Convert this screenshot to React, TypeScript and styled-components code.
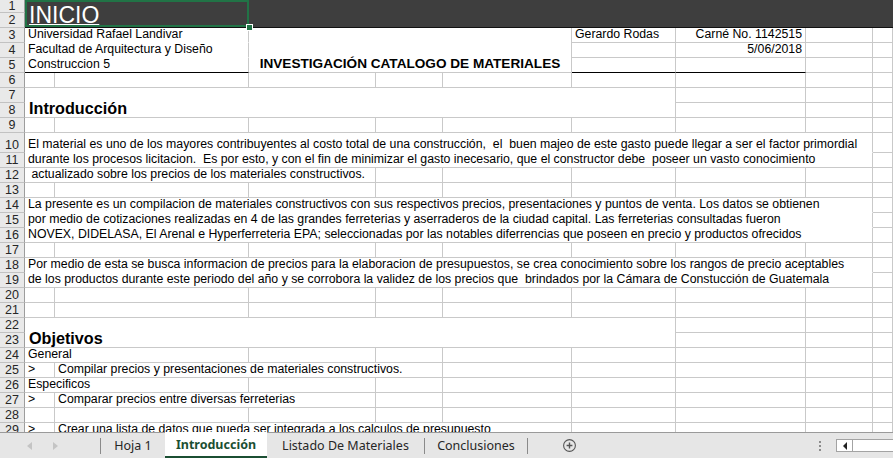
import React from 'react';
import styled, { createGlobalStyle, css } from 'styled-components';

const GlobalStyle = createGlobalStyle`
  html, body { margin: 0; padding: 0; background: #fff; }
  body { font-family: "Liberation Sans", Arial, sans-serif; }
`;

const GRID = '#c9c9c9';

const Window = styled.div`
  width: 893px;
  height: 458px;
  overflow: hidden;
  display: flex;
  flex-direction: column;
  background: #fff;
`;

const Sheet = styled.div`
  flex: 0 0 432px;
  overflow: hidden;
  display: grid;
  grid-template-columns: 25px 30px 194px 127px 67px 129px 104px 130px 67px 1fr;
  grid-template-rows: 13px repeat(8, 15px) 20px repeat(19, 15px);
`;

const RowHead = styled.div<{ $row: number }>`
  grid-column: 1;
  grid-row: ${p => p.$row};
  box-sizing: border-box;
  background: #e9e9e9;
  border-bottom: 1px solid #c2c2c2;
  border-right: 1px solid #9d9d9d;
  display: flex;
  align-items: ${p => (p.$row === 1 ? 'center' : 'flex-end')};
  justify-content: center;
  font-size: 12.5px;
  line-height: ${p => (p.$row === 1 ? '12px' : '14px')};
  color: #262626;
  overflow: hidden;
`;

type Variant = 'plain' | 'title' | 'heading' | 'link' | 'band';

interface CellProps {
  $row: number;
  $col: number;
  $span: number;
  $rows: number;
  $variant: Variant;
  $align: 'left' | 'right' | 'center';
  $bottom: 'grid' | 'none' | 'dark';
}

const Cell = styled.div<CellProps>`
  grid-column: ${p => p.$col + 2} / span ${p => p.$span};
  grid-row: ${p => p.$row} / span ${p => p.$rows};
  box-sizing: border-box;
  position: relative;
  display: flex;
  align-items: flex-end;
  justify-content: ${p => (p.$align === 'right' ? 'flex-end' : p.$align === 'center' ? 'center' : 'flex-start')};
  padding: 0 3px 1px 3px;
  border-right: 1px solid ${GRID};
  border-bottom: ${p => (p.$bottom === 'none' ? '1px solid transparent' : p.$bottom === 'dark' ? '1px solid #000' : `1px solid ${GRID}`)};
  font-size: 12.3px;
  line-height: 14px;
  color: #000;
  white-space: pre;
  overflow: hidden;
  ${p => p.$variant === 'title' && css`
    font-weight: 700;
    font-size: 13.6px;
    padding-bottom: 1px;
  `}
  ${p => p.$variant === 'heading' && css`
    font-weight: 700;
    font-size: 16.2px;
    line-height: 18px;
    padding-bottom: 0;
    padding-left: 4px;
  `}
  ${p => p.$variant === 'band' && css`
    background: #3e3e3e;
    border-right: none;
    border-bottom: 1px solid #111;
  `}
  ${p => p.$variant === 'link' && css`
    background: #3e3e3e;
    border-right: none;
    border-bottom: 1px solid #111;
    color: #fff;
    font-size: 23px;
    line-height: 24px;
    padding: 0 0 0 4px;
    overflow: visible;
    z-index: 2;
    box-shadow: inset 0 0 0 2px #217346;
    text-decoration: underline;
    text-decoration-thickness: 1px;
    text-underline-offset: 1px;
  `}
`;

const Handle = styled.span`
  position: absolute;
  right: -4px;
  bottom: -4px;
  width: 5px;
  height: 5px;
  background: #217346;
  border: 1px solid #fff;
`;

const TabBar = styled.div`
  flex: 1;
  display: flex;
  align-items: stretch;
  background: #e6e6e6;
  border-top: 1px solid #9a9a9a;
  font-family: "Noto Sans", "Open Sans", sans-serif;
  font-size: 12.5px;
  color: #262626;
`;

const NavArea = styled.div`
  width: 100px;
  display: flex;
  align-items: center;
  padding-left: 27px;
  gap: 21px;
  box-sizing: border-box;
`;

const NavArrow = styled.span<{ $dir: 'left' | 'right' }>`
  width: 0;
  height: 0;
  border-top: 4px solid transparent;
  border-bottom: 4px solid transparent;
  ${p => (p.$dir === 'left' ? 'border-right: 5px solid #c4c4c4;' : 'border-left: 5px solid #c4c4c4;')}
`;

const Sep = styled.span`
  width: 1px;
  height: 16px;
  background: #8a8a8a;
  align-self: center;
`;

const Tab = styled.div<{ $active?: boolean; $w: number }>`
  width: ${p => p.$w}px;
  display: flex;
  align-items: center;
  justify-content: center;
  box-sizing: border-box;
  ${p => p.$active && css`
    background: #fff;
    font-weight: 700;
    color: #1b4f33;
    border-bottom: 2px solid #1b4f33;
    margin-top: -1px;
  `}
`;

const AddButton = styled.div`
  margin-left: 35px;
  align-self: center;
  width: 13px;
  height: 13px;
  color: #555;
  display: flex;
`;

const Spacer = styled.div`
  flex: 1;
`;

const Dots = styled.div`
  align-self: center;
  display: flex;
  flex-direction: column;
  gap: 2px;
  margin-right: 15px;
  span {
    width: 2px;
    height: 2px;
    background: #8c8c8c;
  }
`;

const Scroll = styled.div`
  align-self: center;
  width: 60px;
  height: 13px;
  margin-right: -3px;
  box-sizing: border-box;
  border: 1px solid #a3a3a3;
  background: #fff;
  display: flex;
`;

const ScrollBtn = styled.div`
  width: 15px;
  border-right: 1px solid #a3a3a3;
  display: flex;
  align-items: center;
  justify-content: center;
  &::before {
    content: '';
    border-top: 4px solid transparent;
    border-bottom: 4px solid transparent;
    border-right: 4px solid #222;
  }
`;

interface Spec {
  r: number;
  c: number;
  s?: number;
  rs?: number;
  text?: string;
  v?: Variant;
  align?: 'left' | 'right' | 'center';
  bottom?: 'grid' | 'none' | 'dark';
}

const specs: Spec[] = [
  { r: 1, c: 0, s: 2, rs: 2, v: 'link', text: 'INICIO' },
  { r: 1, c: 2, s: 7, rs: 2, v: 'band' },
  { r: 3, c: 0, s: 2, text: 'Universidad Rafael Landivar', bottom: 'none' },
  { r: 4, c: 0, s: 2, text: 'Facultad de Arquitectura y Diseño', bottom: 'none' },
  { r: 5, c: 0, s: 2, text: 'Construccion 5', bottom: 'dark' },
  { r: 3, c: 2, s: 3, rs: 3, v: 'title', align: 'center', text: 'INVESTIGACIÓN CATALOGO DE MATERIALES' },
  { r: 3, c: 5, text: 'Gerardo Rodas' },
  { r: 3, c: 6, text: 'Carné No. 1142515', align: 'right' },
  { r: 4, c: 6, text: '5/06/2018', align: 'right' },
  { r: 5, c: 5, bottom: 'dark' },
  { r: 5, c: 6, bottom: 'dark' },
  { r: 7, c: 0, s: 6, rs: 2, v: 'heading', text: 'Introducción' },
  { r: 10, c: 0, s: 8, bottom: 'none', text: 'El material es uno de los mayores contribuyentes al costo total de una construcción,  el  buen majeo de este gasto puede llegar a ser el factor primordial' },
  { r: 11, c: 0, s: 8, text: 'durante los procesos licitacion.  Es por esto, y con el fin de minimizar el gasto inecesario, que el constructor debe  poseer un vasto conocimiento' },
  { r: 12, c: 0, s: 3, text: ' actualizado sobre los precios de los materiales constructivos.' },
  { r: 14, c: 0, s: 8, bottom: 'none', text: 'La presente es un compilacion de materiales constructivos con sus respectivos precios, presentaciones y puntos de venta. Los datos se obtienen' },
  { r: 15, c: 0, s: 8, bottom: 'none', text: 'por medio de cotizaciones realizadas en 4 de las grandes ferreterias y aserraderos de la ciudad capital. Las ferreterias consultadas fueron' },
  { r: 16, c: 0, s: 8, text: 'NOVEX, DIDELASA, El Arenal e Hyperferreteria EPA; seleccionadas por las notables diferrencias que poseen en precio y productos ofrecidos' },
  { r: 18, c: 0, s: 8, bottom: 'none', text: 'Por medio de esta se busca informacion de precios para la elaboracion de presupuestos, se crea conocimiento sobre los rangos de precio aceptables' },
  { r: 19, c: 0, s: 8, text: 'de los productos durante este periodo del año y se corrobora la validez de los precios que  brindados por la Cámara de Constucción de Guatemala' },
  { r: 22, c: 0, s: 6, rs: 2, v: 'heading', text: 'Objetivos' },
  { r: 24, c: 0, s: 2, text: 'General' },
  { r: 25, c: 0, text: '>' },
  { r: 25, c: 1, s: 3, text: 'Compilar precios y presentaciones de materiales constructivos.' },
  { r: 26, c: 0, s: 2, text: 'Especificos' },
  { r: 27, c: 0, text: '>' },
  { r: 27, c: 1, s: 2, text: 'Comparar precios entre diversas ferreterias' },
  { r: 29, c: 0, text: '>' },
  { r: 29, c: 1, s: 4, text: 'Crear una lista de datos que pueda ser integrada a los calculos de presupuesto' },
];

const ROWS = 29;
const COLS = 9;

function buildCells(): Spec[] {
  const taken: boolean[][] = Array.from({ length: ROWS + 1 }, () => Array(COLS).fill(false));
  specs.forEach(sp => {
    for (let r = sp.r; r < sp.r + (sp.rs || 1); r++) {
      for (let c = sp.c; c < sp.c + (sp.s || 1); c++) taken[r][c] = true;
    }
  });
  const out: Spec[] = [...specs];
  for (let r = 1; r <= ROWS; r++) {
    for (let c = 0; c < COLS; c++) {
      if (!taken[r][c]) out.push({ r, c });
    }
  }
  return out;
}

const cells = buildCells();

function PlusIcon() {
  return (
    <svg width="13" height="13" viewBox="0 0 13 13" fill="none" stroke="currentColor" strokeWidth="1.1">
      <circle cx="6.5" cy="6.5" r="5.9" />
      <path d="M6.5 3.6v5.8M3.6 6.5h5.8" strokeWidth="1.4" />
    </svg>
  );
}

export default function App() {
  return (
    <Window>
      <GlobalStyle />
      <Sheet>
        {Array.from({ length: ROWS }, (_, i) => (
          <RowHead key={`h${i}`} $row={i + 1}>{i + 1}</RowHead>
        ))}
        {cells.map(sp => (
          <Cell
            key={`${sp.r}-${sp.c}`}
            $row={sp.r}
            $col={sp.c}
            $span={sp.s || 1}
            $rows={sp.rs || 1}
            $variant={sp.v || 'plain'}
            $align={sp.align || 'left'}
            $bottom={sp.bottom || 'grid'}
          >
            {sp.text}
            {sp.v === 'link' && <Handle />}
          </Cell>
        ))}
      </Sheet>
      <TabBar>
        <NavArea>
          <NavArrow $dir="left" />
          <NavArrow $dir="right" />
        </NavArea>
        <Sep />
        <Tab $w={64}>Hoja 1</Tab>
        <Tab $w={102} $active>Introducción</Tab>
        <Tab $w={157}>Listado De Materiales</Tab>
        <Sep />
        <Tab $w={102}>Conclusiones</Tab>
        <Sep />
        <AddButton><PlusIcon /></AddButton>
        <Spacer />
        <Dots><span /><span /><span /></Dots>
        <Scroll>
          <ScrollBtn />
        </Scroll>
      </TabBar>
    </Window>
  );
}
